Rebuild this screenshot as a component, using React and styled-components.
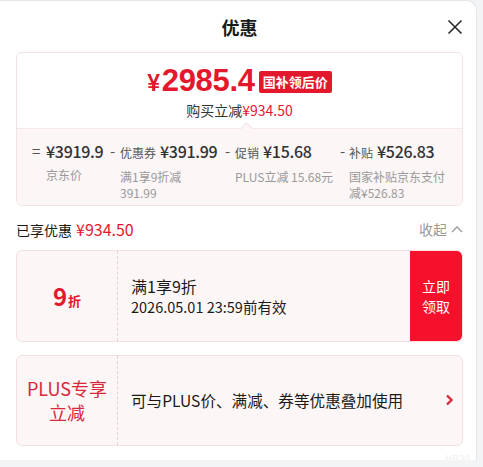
import React from 'react'
import styled, { createGlobalStyle } from 'styled-components'

const RED = '#e4182c'

const Global = createGlobalStyle`
  body {
    margin: 0;
    background: #f3f4f6;
    font-family: "Noto Sans CJK SC", "Noto Sans", sans-serif;
    color: #1a1a1a;
  }
`

const Panel = styled.div`
  width: 447px;
  height: 459px;
  background: #fff;
  border-top: 1px solid #e6e6e6;
  border-right: 1px solid #e6e6e6;
  border-top-right-radius: 10px;
  padding: 0 13px 0 16px;
  box-sizing: content-box;
  position: relative;
`

const Header = styled.div`
  height: 51px;
  display: flex;
  align-items: center;
  justify-content: center;
  position: relative;
`

const Title = styled.h1`
  margin: 0;
  font-size: 18px;
  font-weight: 700;
  color: #1a1a1a;
`

const Close = styled.button`
  position: absolute;
  right: 0;
  top: 18px;
  width: 16px;
  height: 16px;
  padding: 0;
  border: none;
  background: none;
  display: flex;
`

const PriceCard = styled.div`
  border: 1px solid #f2e4e4;
  border-radius: 6px;
  overflow: hidden;
`

const PriceTop = styled.div`
  height: 75px;
  display: flex;
  flex-direction: column;
  align-items: center;
  padding-top: 13px;
  box-sizing: border-box;
`

const PriceLine = styled.div`
  display: flex;
  align-items: center;
  gap: 4px;
  height: 32px;
`

const BigPrice = styled.span`
  color: ${RED};
  font-family: "Liberation Sans", Arial, sans-serif;
  font-size: 31px;
  font-weight: 700;
  letter-spacing: -0.3px;
  line-height: 30px;
  span {
    font-size: 23px;
    margin-right: 2px;
  }
`

const Badge = styled.span`
  background: ${RED};
  color: #fff;
  font-size: 13px;
  font-weight: 700;
  line-height: 22px;
  padding: 0 4px;
  border-radius: 2px;
`

const Saved = styled.div`
  font-size: 14px;
  color: #333;
  line-height: 20px;
  margin-top: 2px;
  em {
    font-style: normal;
    color: ${RED};
  }
`

const PriceBottom = styled.div`
  position: relative;
  background: #fcf6f6;
  border-top: 1px solid #f6e8e8;
  height: 77px;
  display: grid;
  grid-template-columns: 78px 115px 115px 1fr;
  padding: 9px 0 0 15px;
  box-sizing: border-box;
  &::before {
    content: '';
    position: absolute;
    left: 225px;
    top: -5px;
    width: 8px;
    height: 8px;
    background: #fcf6f6;
    border-top: 1px solid #f3e3e3;
    border-left: 1px solid #f3e3e3;
    transform: rotate(45deg);
  }
`

const Part = styled.div`
  display: flex;
`

const Op = styled.span`
  width: ${p => p.$w}px;
  flex-shrink: 0;
  font-size: 15px;
  color: #555;
  line-height: 26px;
`

const PartBody = styled.div`
  display: flex;
  flex-direction: column;
`

const AmountLine = styled.div`
  display: flex;
  align-items: baseline;
  gap: 4px;
  line-height: 26px;
  white-space: nowrap;
`

const SmallLabel = styled.span`
  font-size: 12px;
  color: #555;
`

const Amount = styled.span`
  font-size: 16px;
  font-weight: 500;
  letter-spacing: -0.3px;
  color: #333;
`

const Sub = styled.div`
  font-size: 12px;
  color: #999;
  line-height: 16px;
  margin-top: 3px;
  white-space: ${p => (p.$nowrap ? 'nowrap' : 'normal')};
`

const EnjoyRow = styled.div`
  display: flex;
  justify-content: space-between;
  align-items: center;
  height: 44px;
  padding-top: 2px;
  box-sizing: border-box;
  font-size: 14px;
  color: #1a1a1a;
  em {
    font-style: normal;
    font-size: 16px;
    color: ${RED};
    margin-left: 4px;
  }
`

const Fold = styled.span`
  display: flex;
  align-items: center;
  gap: 4px;
  color: #999;
  font-size: 14px;
`

const Coupon = styled.div`
  display: flex;
  height: ${p => p.$h}px;
  margin-bottom: 13px;
  background: #fdf6f6;
  border: 1px solid #f3dfe1;
  border-radius: 6px;
  overflow: hidden;
  box-sizing: border-box;
`

const CouponLeft = styled.div`
  width: 100px;
  flex-shrink: 0;
  border-right: 1px dashed #e6d2d4;
  display: flex;
  align-items: center;
  justify-content: center;
  text-align: center;
  color: ${RED};
`

const Discount = styled.span`
  font-weight: 700;
  font-size: 24px;
  line-height: 1;
  small {
    font-size: 13px;
    margin-left: 1px;
  }
`

const PlusTag = styled.div`
  font-size: 18px;
  line-height: 24px;
  color: #d8283c;
  padding-bottom: 2px;
`

const CouponMid = styled.div`
  flex: 1;
  display: flex;
  flex-direction: column;
  justify-content: center;
  padding-left: 13px;
  color: #1a1a1a;
`

const CouponTitle = styled.div`
  font-size: 16px;
  line-height: 21px;
`

const CouponDate = styled.div`
  font-size: 14.5px;
  line-height: 20px;
`

const CouponText = styled.div`
  font-size: 15.6px;
  padding-bottom: 2px;
`

const GrabButton = styled.button`
  width: 52px;
  border: none;
  background: #f5112b;
  color: #fff;
  font-family: inherit;
  font-size: 14px;
  line-height: 20px;
  padding: 0;
  border-top-right-radius: 5px;
  border-bottom-right-radius: 5px;
`

const Arrow = styled.div`
  width: 18px;
  display: flex;
  align-items: center;
  padding-bottom: 2px;
`

const Mark = styled.span`
  position: absolute;
  right: 6px;
  bottom: -6px;
  font-size: 10px;
  color: #f0f0f0;
`

const parts = [
  { op: '=', w: 14, amount: '¥3919.9', sub: '京东价' },
  { op: '-', w: 10, label: '优惠券', amount: '¥391.99', sub: '满1享9折减 391.99', width: 70 },
  { op: '-', w: 10, label: '促销', amount: '¥15.68', sub: 'PLUS立减 15.68元', nowrap: true },
  { op: '-', w: 9, label: '补贴', amount: '¥526.83', sub: '国家补贴京东支付减¥526.83', width: 100 }
]

export default function App() {
  return (
    <Panel>
      <Global />
      <Header>
        <Title>优惠</Title>
        <Close aria-label="关闭">
          <svg width="16" height="16" viewBox="0 0 16 16">
            <path d="M1.5 1.5L14.5 14.5M14.5 1.5L1.5 14.5" stroke="#222" strokeWidth="1.5" fill="none" />
          </svg>
        </Close>
      </Header>

      <PriceCard>
        <PriceTop>
          <PriceLine>
            <BigPrice><span>¥</span>2985.4</BigPrice>
            <Badge>国补领后价</Badge>
          </PriceLine>
          <Saved>购买立减<em>¥934.50</em></Saved>
        </PriceTop>
        <PriceBottom>
          {parts.map((p, i) => (
            <Part key={i}>
              <Op $w={p.w}>{p.op}</Op>
              <PartBody>
                <AmountLine>
                  {p.label && <SmallLabel>{p.label}</SmallLabel>}
                  <Amount>{p.amount}</Amount>
                </AmountLine>
                <Sub $nowrap={p.nowrap} style={p.width ? { width: p.width } : undefined}>{p.sub}</Sub>
              </PartBody>
            </Part>
          ))}
        </PriceBottom>
      </PriceCard>

      <EnjoyRow>
        <span>已享优惠<em>¥934.50</em></span>
        <Fold>
          收起
          <svg width="12" height="8" viewBox="0 0 12 8">
            <path d="M1 7L6 2L11 7" stroke="#999" strokeWidth="1.3" fill="none" />
          </svg>
        </Fold>
      </EnjoyRow>

      <Coupon $h={92}>
        <CouponLeft>
          <Discount>9<small>折</small></Discount>
        </CouponLeft>
        <CouponMid>
          <CouponTitle>满1享9折</CouponTitle>
          <CouponDate>2026.05.01 23:59前有效</CouponDate>
        </CouponMid>
        <GrabButton>立即<br />领取</GrabButton>
      </Coupon>

      <Coupon $h={91}>
        <CouponLeft>
          <PlusTag>PLUS专享<br />立减</PlusTag>
        </CouponLeft>
        <CouponMid>
          <CouponText>可与PLUS价、满减、券等优惠叠加使用</CouponText>
        </CouponMid>
        <Arrow>
          <svg width="10" height="12" viewBox="0 0 10 12">
            <path d="M3 1.5L7.5 6L3 10.5" stroke="#d8283c" strokeWidth="2.4" fill="none" />
          </svg>
        </Arrow>
      </Coupon>
      <Mark>HB20</Mark>
    </Panel>
  )
}
